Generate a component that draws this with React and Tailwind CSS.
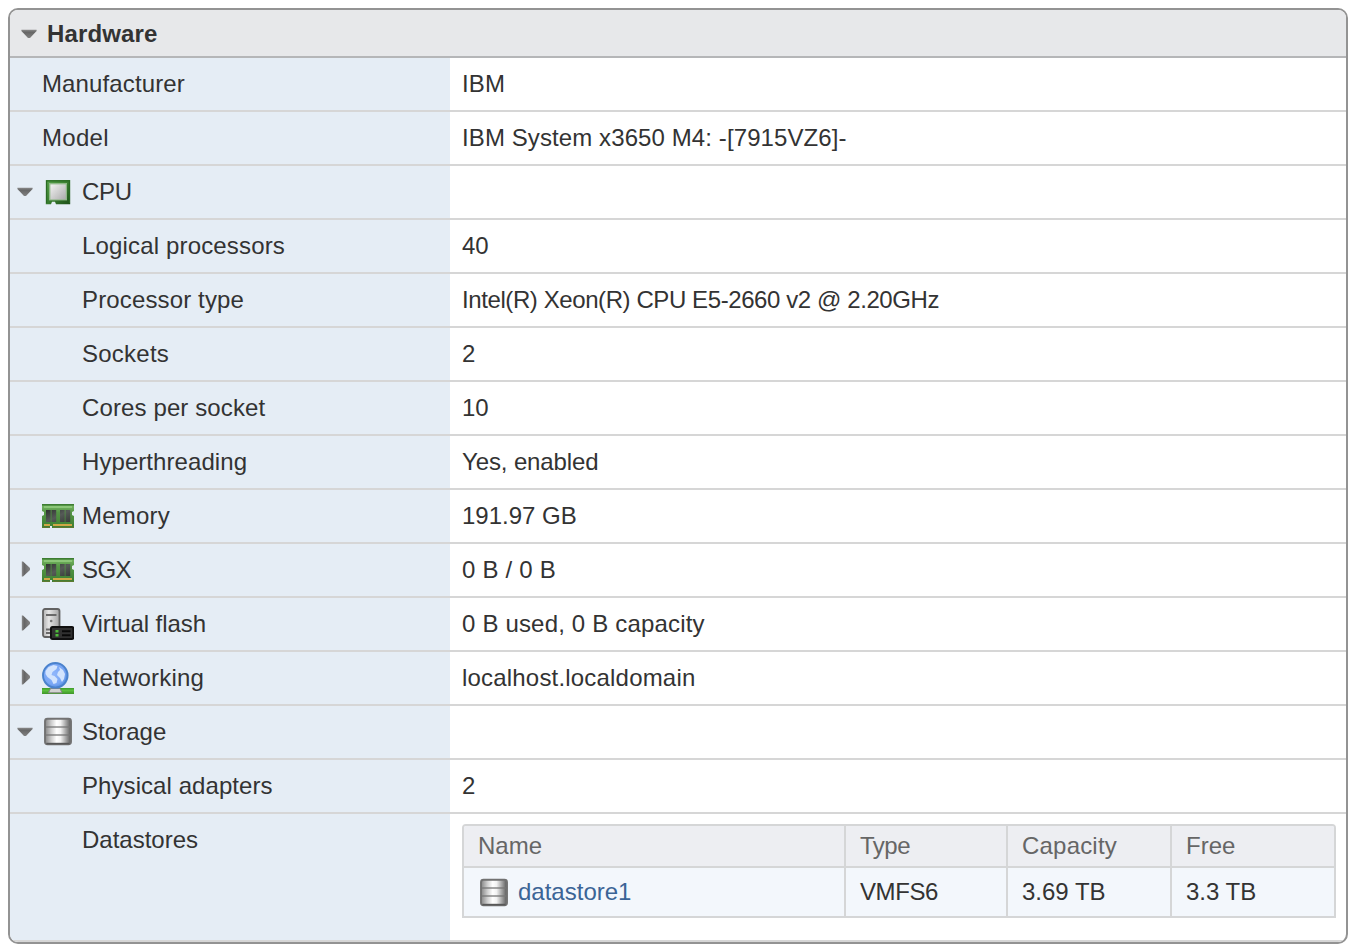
const Down = () => (
  <svg viewBox="0 0 16 10" className="h-[10px] w-[16px] shrink-0">
    <defs>
      <linearGradient id="arrow-down" x1="0" y1="0" x2="0" y2="1">
        <stop offset="0" stopColor="#8a8a8a" />
        <stop offset=".3" stopColor="#666" />
        <stop offset="1" stopColor="#808080" />
      </linearGradient>
    </defs>
    <path d="M.4 .8h15.2v1.2L9 9H7L.4 2z" fill="url(#arrow-down)" />
  </svg>
);

const Right = () => (
  <svg viewBox="0 0 10 16" className="h-[16px] w-[10px] shrink-0">
    <defs>
      <linearGradient id="arrow-right" x1="0" y1="0" x2="1" y2="0">
        <stop offset="0" stopColor="#8a8a8a" />
        <stop offset=".3" stopColor="#666" />
        <stop offset="1" stopColor="#858585" />
      </linearGradient>
    </defs>
    <path d="M.8 .6H2L9 7v2L2 15.4H.8z" fill="url(#arrow-right)" />
  </svg>
);

const CpuIcon = () => (
  <svg viewBox="0 0 32 32" className="size-8 blur-[0.3px]">
    <defs>
      <linearGradient id="cpu-g" x1="0" y1="0" x2="1" y2="1">
        <stop offset="0" stopColor="#5aa64c" />
        <stop offset=".5" stopColor="#3a7f30" />
        <stop offset="1" stopColor="#1d4f18" />
      </linearGradient>
      <linearGradient id="cpu-s" x1="0" y1="0" x2="1" y2="1">
        <stop offset="0" stopColor="#f2f2f2" />
        <stop offset="1" stopColor="#acacac" />
      </linearGradient>
    </defs>
    <path d="M3.8 4h24.4v24.2H14l-1-2.4h-3l-1 2.4H3.8z" fill="url(#cpu-g)" />
    <path d="M4.6 27V4.8h22.8V27" fill="none" stroke="#2b6a24" strokeWidth="1.2" />
    <rect x="7" y="7" width="18" height="17.4" fill="#8fb887" />
    <rect x="8.4" y="8.4" width="15.4" height="15" fill="url(#cpu-s)" />
  </svg>
);

const MemoryIcon = () => (
  <svg viewBox="0 0 32 32" className="size-8 blur-[0.3px]">
    <defs>
      <linearGradient id="mem-g" x1="0" y1="0" x2="0" y2="1">
        <stop offset="0" stopColor="#7dbb69" />
        <stop offset=".35" stopColor="#559746" />
        <stop offset="1" stopColor="#3d7f32" />
      </linearGradient>
      <linearGradient id="mem-c" x1="0" y1="0" x2="1" y2="1">
        <stop offset="0" stopColor="#2f3330" />
        <stop offset=".5" stopColor="#555a57" />
        <stop offset="1" stopColor="#383c39" />
      </linearGradient>
    </defs>
    <path d="M0 4h32v7l-2 1v3l2 1v12H10v-2H8v2H0V16l2-1v-3l-2-1z" fill="url(#mem-g)" />
    <path d="M0 4.8h32" stroke="#3d7d32" strokeWidth="1.6" />
    <path d="M2 7h28" stroke="#8fc97b" strokeWidth="1.8" />
    <path d="M2 25h6M11 25h19" stroke="#cfa746" strokeWidth="1.9" />
    <path d="M0 27.4h8M11 27.4h21" stroke="#5c7a30" strokeWidth="1.2" />
    <path d="M4 10h4.7v12H4zM9.5 10h4.7v12H9.500zM18 10h4.700v12H18zM23.500 10h4.700v12h-4.700z" fill="url(#mem-c)" />
  </svg>
);

const FlashIcon = () => (
  <svg viewBox="0 0 32 32" className="size-8 blur-[0.3px]">
    <defs>
      <linearGradient id="fl-g" x1="0" y1="0" x2="1" y2="0">
        <stop offset="0" stopColor="#b0b0b0" />
        <stop offset=".35" stopColor="#e6e6e6" />
        <stop offset="1" stopColor="#a4a4a4" />
      </linearGradient>
    </defs>
    <rect x="1" y="1" width="16.5" height="28" rx="2" fill="url(#fl-g)" stroke="#626262" strokeWidth="1.8" />
    <path d="M4 7h10.500M4 21.500h5M4 25h5" stroke="#696969" strokeWidth="1.8" />
    <circle cx="9.200" cy="13" r="1.3" fill="#777" />
    <rect x="9" y="19" width="22.3" height="12" rx="1.5" fill="#303030" stroke="#101010" strokeWidth="2" />
    <path d="M13.5 22h3v2.4h-3zM13.5 26h3v2.4h-3z" fill="#4fbd3b" />
    <path d="M20 23.300h8.500M20 27.3h8.500" stroke="#080808" strokeWidth="2" />
  </svg>
);

const NetworkIcon = () => (
  <svg viewBox="0 0 32 32" className="size-8 blur-[0.4px]">
    <defs>
      <radialGradient id="net-g" cx=".45" cy=".45" r=".6">
        <stop offset="0" stopColor="#8fb6fb" />
        <stop offset=".7" stopColor="#79a6f5" />
        <stop offset="1" stopColor="#4c86d8" />
      </radialGradient>
      <linearGradient id="net-b" x1="0" y1="0" x2="0" y2="1">
        <stop offset="0" stopColor="#3f9a2b" />
        <stop offset=".4" stopColor="#5cc03e" />
        <stop offset="1" stopColor="#3e9529" />
      </linearGradient>
    </defs>
    <path d="M0 26h32v6H0z" fill="url(#net-b)" />
    <path d="M8.500 26.500h9.500l2 4.300H6.500z" fill="#d2d2d2" stroke="#858585" />
    <circle cx="13.3" cy="13.300" r="12.300" fill="url(#net-g)" stroke="#4a82cc" strokeWidth="1.9" />
    <path d="M3.500 9l3-4 5-2 4 1-1 3-4 3-1 3 3 1 3 3-1 4-3 1-2-4-4-3-2-3z" fill="#d3e4fd" />
    <path d="M17 5l4 3 2 4-1 5-2 3-2-4-3-3 1-3 2-2z" fill="#d3e4fd" />
  </svg>
);

const StorageIcon = ({ id }) => (
  <svg viewBox="0 0 32 32" className="size-8 shrink-0 blur-[0.3px]">
    <defs>
      <linearGradient id={id} x1="0" y1="0" x2="1" y2="0">
        <stop offset="0" stopColor="#858585" />
        <stop offset=".25" stopColor="#cfcfcf" />
        <stop offset=".45" stopColor="#fff" />
        <stop offset=".6" stopColor="#f2f2f2" />
        <stop offset="1" stopColor="#595959" />
      </linearGradient>
    </defs>
    <rect x="3" y="2.800" width="26" height="25.400" rx="2.5" fill={`url(#${id})`} stroke="#727272" strokeWidth="1.900" />
    <path d="M4 11h24M4 19h24" stroke="#777" strokeWidth="1.8" opacity=".65" />
    <path d="M4.500 27.600h23" stroke="#585858" strokeWidth="1.6" />
  </svg>
);

const rows = [
  { label: "Manufacturer", lt: "tracking-[0.13px]", value: "IBM", vt: "tracking-[0.2px]" },
  { label: "Model", lt: "tracking-[0.3px]", value: "IBM System x3650 M4: -[7915VZ6]-", vt: "tracking-[0.1px]" },
  { label: "CPU", lt: "tracking-[-0.3px]", icon: <CpuIcon />, arrow: "down" },
  { label: "Logical processors", lt: "tracking-[0.16px]", value: "40", child: true },
  { label: "Processor type", lt: "tracking-[0.14px]", value: "Intel(R) Xeon(R) CPU E5-2660 v2 @ 2.20GHz", vt: "tracking-[-0.41px]", child: true },
  { label: "Sockets", lt: "tracking-[0.25px]", value: "2", child: true },
  { label: "Cores per socket", lt: "tracking-[0.12px]", value: "10", child: true },
  { label: "Hyperthreading", lt: "tracking-[0.07px]", value: "Yes, enabled", vt: "tracking-[-0.12px]", child: true },
  { label: "Memory", lt: "tracking-[0.2px]", value: "191.97 GB", icon: <MemoryIcon /> },
  { label: "SGX", lt: "tracking-[-0.6px]", value: "0 B / 0 B", vt: "tracking-[0.2px]", icon: <MemoryIcon />, arrow: "right" },
  { label: "Virtual flash", lt: "tracking-[-0.08px]", value: "0 B used, 0 B capacity", vt: "tracking-[0.18px]", icon: <FlashIcon />, arrow: "right" },
  { label: "Networking", lt: "tracking-[0.2px]", value: "localhost.localdomain", vt: "tracking-[0.19px]", icon: <NetworkIcon />, arrow: "right" },
  { label: "Storage", lt: "tracking-[0.05px]", icon: <StorageIcon id="storage-row" />, arrow: "down" },
  { label: "Physical adapters", lt: "tracking-[0.07px]", value: "2", child: true },
];

function Row({ row }) {
  return (
    <div className="flex h-[54px] border-b-2 border-[#d6d6d6]">
      <div className="flex w-[440px] items-center bg-[#e5edf5]">
        <div className="flex w-8 items-center pl-[7px]">
          {row.arrow === "down" && <Down />}
          {row.arrow === "right" && <span className="mb-[2px] ml-[4px] flex"><Right /></span>}
        </div>
        {(row.icon || row.child) && <div className="w-10">{row.icon}</div>}
        <span className={row.lt}>{row.label}</span>
      </div>
      <div className="flex items-center pl-3">
        <span className={row.vt}>{row.value}</span>
      </div>
    </div>
  );
}

const columns = [
  { name: "Name", cls: "border-r-2" },
  { name: "Type", cls: "border-r-2 tracking-[-0.5px]" },
  { name: "Capacity", cls: "border-r-2 tracking-[0.2px]" },
  { name: "Free", cls: "" },
];

export default function App() {
  return (
    <div className="h-[952px] w-[1362px] bg-white p-2 font-['Liberation_Sans',sans-serif] text-[24px] leading-[28px] whitespace-nowrap text-[#333]">
      <div className="h-[936px] w-[1340px] overflow-hidden rounded-[10px] border-2 border-[#939393] bg-white">
        <div className="flex h-12 items-center border-b-2 border-[#b5b6b8] bg-[#e7e8ea] pt-[2px] pl-[11px] font-bold">
          <Down />
          <span className="ml-[10px] tracking-[0.15px]">Hardware</span>
        </div>
        {rows.map((row) => <Row key={row.label} row={row} />)}
        <div className="flex h-[128px] border-b-2 border-[#d6d6d6]">
          <div className="w-[440px] bg-[#e5edf5] pt-3 pl-[72px]">Datastores</div>
          <div className="pt-[10px] pl-3">
            <div className="grid h-[94px] w-[874px] grid-cols-[382px_162px_164px_162px] grid-rows-[42px_48px] overflow-hidden rounded-t-[4px] border-2 border-[#d5d6d7]">
              {columns.map((c) => (
                <div key={c.name} className={`flex items-center border-b-2 border-[#d5d6d7] bg-[#edeef2] pl-[14px] text-[#666] ${c.cls}`}>{c.name}</div>
              ))}
              <div className="flex items-center border-r-2 border-[#d5d6d7] bg-[#f3f7fc] pl-[14px] text-[#3b6496]">
                <span className="mt-[2px] flex"><StorageIcon id="storage-cell" /></span>
                <span className="ml-2">datastore1</span>
              </div>
              <div className="flex items-center border-r-2 border-[#d5d6d7] bg-[#f3f7fc] pl-[14px] tracking-[-0.4px]">VMFS6</div>
              <div className="flex items-center border-r-2 border-[#d5d6d7] bg-[#f3f7fc] pl-[14px]">3.69 TB</div>
              <div className="flex items-center bg-[#f3f7fc] pl-[14px]">3.3 TB</div>
            </div>
          </div>
        </div>
      </div>
    </div>
  );
}
